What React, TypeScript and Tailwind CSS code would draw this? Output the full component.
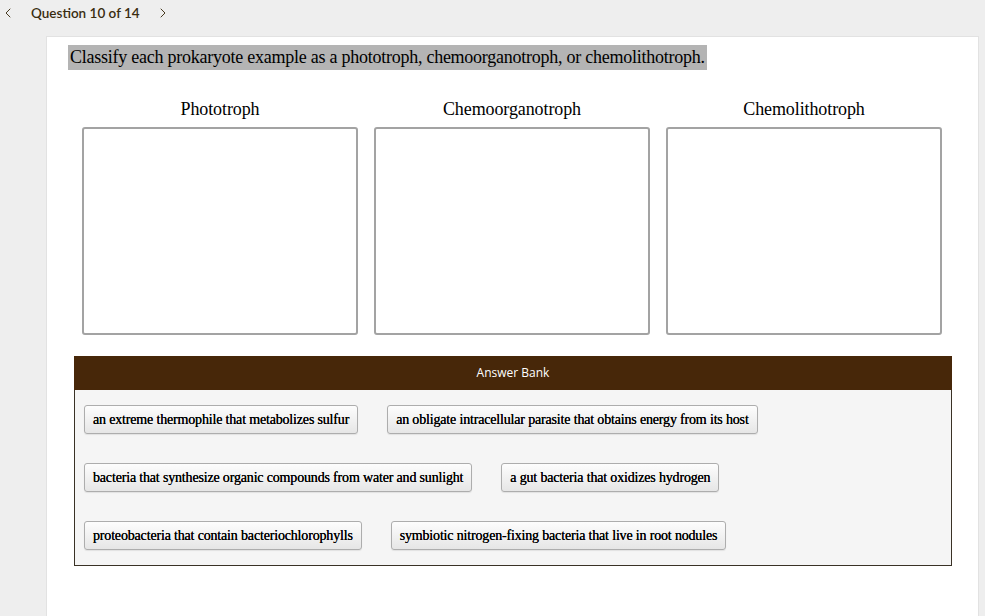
import React from "react";
import { ChevronLeft, ChevronRight } from "lucide-react";

const rows: string[][] = [
  [
    "an extreme thermophile that metabolizes sulfur",
    "an obligate intracellular parasite that obtains energy from its host",
  ],
  [
    "bacteria that synthesize organic compounds from water and sunlight",
    "a gut bacteria that oxidizes hydrogen",
  ],
  [
    "proteobacteria that contain bacteriochlorophylls",
    "symbiotic nitrogen-fixing bacteria that live in root nodules",
  ],
];

const cols = ["Phototroph", "Chemoorganotroph", "Chemolithotroph"];

export default function App() {
  return (
    <div className="w-[985px] h-[616px] overflow-hidden bg-[#eeeeee] flex flex-col">
      <div className="h-[36px] flex items-start pt-[4px] text-[#3a2c10] font-['Lato','Open_Sans',sans-serif] text-[13.5px] font-semibold">
        <div className="h-[18px] flex items-center">
          <ChevronLeft className="ml-[0px] w-[16px] h-[16px]" strokeWidth={1.4} />
          <span className="ml-[15px]">Question 10 of 14</span>
          <ChevronRight className="ml-[15px] w-[16px] h-[16px]" strokeWidth={1.4} />
        </div>
      </div>
      <div className="flex-1 ml-[46px] mr-[6px] bg-white border-l border-t border-r border-[#e2e2e2] font-['Liberation_Serif','Times_New_Roman',serif] text-black">
        <div className="pl-[21px] pt-[8px]">
          <span className="inline-block bg-[#b4b4b4] h-[25px] leading-[25px] px-[2px] text-[18px] tracking-[-0.25px]">
            Classify each prokaryote example as a phototroph, chemoorganotroph, or chemolithotroph.
          </span>
        </div>
        <div className="ml-[35px] mt-[28px] grid grid-cols-[276px_276px_276px] gap-x-[16px]">
          {cols.map((c) => (
            <div key={c} className="flex flex-col">
              <div className="text-center text-[18px] h-[22px] leading-[22px] tracking-[-0.1px]">{c}</div>
              <div className="mt-[7px] h-[208px] border-2 border-[#a3a3a3] rounded-[3px] bg-white" />
            </div>
          ))}
        </div>
        <div className="ml-[27px] mt-[21px] w-[878px]">
          <div className="h-[34px] bg-[#472709] flex items-center justify-center text-white text-[12px] font-['Open_Sans','Noto_Sans',sans-serif]">
            Answer Bank
          </div>
          <div className="bg-[#f5f5f5] border border-t-0 border-[#3a3226] pl-[9px] pt-[15px] pb-[15px] flex flex-col gap-[29px]">
            {rows.map((r, i) => (
              <div key={i} className="flex gap-[29px]">
                {r.map((t) => (
                  <div
                    key={t}
                    className="h-[29px] px-[8px] flex items-center rounded-[3px] border border-[#adadad] bg-gradient-to-b from-[#fdfdfd] to-[#e6e6e6] text-[14px] tracking-[-0.17px] text-black [text-shadow:0_0_0.3px_#000] shadow-[0_1px_1px_rgba(0,0,0,0.08)] whitespace-nowrap"
                  >
                    {t}
                  </div>
                ))}
              </div>
            ))}
          </div>
        </div>
      </div>
    </div>
  );
}
